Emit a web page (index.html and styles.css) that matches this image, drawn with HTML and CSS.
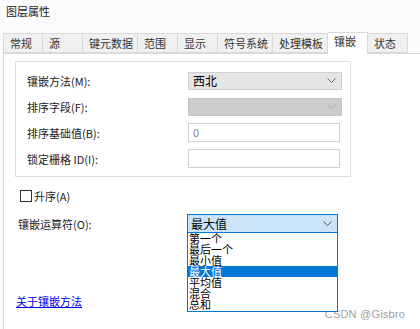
FILE: index.html
```html
<!DOCTYPE html>
<html lang="zh-CN">
<head>
  <meta charset="UTF-8">
  <title>图层属性</title>
  <link rel="stylesheet" href="styles.css">
</head>
<body>
  <div class="window">
    <div class="title">图层属性</div>

    <div class="tabs">
      <span class="tab">常规</span>
      <span class="tab">源</span>
      <span class="tab">键元数据</span>
      <span class="tab">范围</span>
      <span class="tab">显示</span>
      <span class="tab">符号系统</span>
      <span class="tab">处理模板</span>
      <span class="tab active">镶嵌</span>
      <span class="tab">状态</span>
    </div>

    <div class="page">
      <div class="group">
        <div class="row">
          <label>镶嵌方法(M):</label>
          <div class="select">西北
            <svg class="chev" width="9" height="6" viewBox="0 0 9 6"><path d="M0.5 0.5 L4.5 4.5 L8.5 0.5" fill="none" stroke="#666" stroke-width="1"/></svg>
          </div>
        </div>
        <div class="row">
          <label>排序字段(F):</label>
          <div class="select disabled">
            <svg class="chev" width="9" height="6" viewBox="0 0 9 6"><path d="M0.5 0.5 L4.5 4.5 L8.5 0.5" fill="none" stroke="#aaa" stroke-width="1"/></svg>
          </div>
        </div>
        <div class="row">
          <label>排序基础值(B):</label>
          <div class="input muted">0</div>
        </div>
        <div class="row">
          <label>锁定栅格 ID(I):</label>
          <div class="input"></div>
        </div>
      </div>

      <div class="check"><span class="box"></span>升序(A)</div>

      <div class="row op">
        <label>镶嵌运算符(O):</label>
        <div class="combo">
          <div class="combo-head">最大值
            <svg class="chev" width="9" height="6" viewBox="0 0 9 6"><path d="M0.5 0.5 L4.5 4.5 L8.5 0.5" fill="none" stroke="#555" stroke-width="1"/></svg>
          </div>
          <ul class="list">
            <li>第一个</li>
            <li>最后一个</li>
            <li>最小值</li>
            <li class="sel">最大值</li>
            <li>平均值</li>
            <li>混合</li>
            <li>总和</li>
          </ul>
        </div>
      </div>

      <a class="about" href="#">关于镶嵌方法</a>
    </div>

    <div class="mark">CSDN @Gisbro</div>
  </div>
</body>
</html>
```

FILE: styles.css
```css
:root {
  --line: #d9d9d9;
  --tab-bg: #f0f0f0;
  --blue: #0078d7;
  --text: #1a1a1a;
}

body {
  margin: 0;
  font-family: "Noto Sans CJK SC", "Liberation Sans", sans-serif;
  font-size: 11px;
  color: var(--text);
  background: #ffffff;
}

.window {
  position: relative;
  width: 420px;
  height: 329px;
  overflow: hidden;
  background: #fbfbfb;
}

.title {
  height: 31px;
  padding: 3px 0 0 6px;
  box-sizing: border-box;
  line-height: 16px;
  font-size: 11px;
}

.tabs {
  display: flex;
  align-items: flex-end;
  margin-left: 3px;
  height: 22px;
}

.tab {
  min-width: 40px;
  height: 20px;
  padding: 0 4px 0 6px;
  box-sizing: border-box;
  background: var(--tab-bg);
  border: 1px solid var(--line);
  border-left: none;
  line-height: 18px;
  color: #333;
}

.tab:first-child {
  border-left: 1px solid var(--line);
}

.tab.active {
  height: 22px;
  background: #ffffff;
  border-bottom-color: #ffffff;
  line-height: 16px;
  margin-bottom: -1px;
  position: relative;
}

.page {
  margin-left: 3px;
  height: 276px;
  background: #ffffff;
  border-left: 1px solid var(--line);
  border-top: 1px solid var(--line);
  padding: 7px 0 0 11px;
  box-sizing: border-box;
}

.group {
  width: 336px;
  box-sizing: border-box;
  border: 1px solid #dcdcdc;
  padding: 9px 0 8px 11px;
  display: flex;
  flex-direction: column;
  gap: 7px;
}

.row {
  display: flex;
  align-items: center;
  height: 19px;
}

.row label {
  width: 161px;
  line-height: 14px;
}

.select {
  width: 154px;
  height: 18px;
  box-sizing: border-box;
  background: #e5e5e5;
  border: 1px solid #d0d0d0;
  display: flex;
  align-items: center;
  justify-content: space-between;
  padding: 0 5px 0 4px;
  font-size: 12px;
  color: #000;
}

.select.disabled {
  background: #cccccc;
  border-color: #c4c4c4;
  justify-content: flex-end;
}

.input {
  width: 152px;
  height: 19px;
  box-sizing: border-box;
  border: 1px solid #cfcfcf;
  padding: 0 4px;
  line-height: 17px;
}

.input.muted {
  color: #8a8a8a;
}

.check {
  display: flex;
  align-items: center;
  gap: 2px;
  margin: 13px 0 0 5px;
  line-height: 12px;
}

.box {
  width: 10px;
  height: 10px;
  border: 1px solid #333;
  background: #ffffff;
}

.row.op {
  margin: 12px 0 0 3px;
}

.row.op label {
  width: 169px;
}

.combo {
  position: relative;
  width: 151px;
}

.combo-head {
  height: 19px;
  box-sizing: border-box;
  background: #cce4f7;
  border: 1px solid var(--blue);
  display: flex;
  align-items: center;
  justify-content: space-between;
  padding: 0 5px 0 3px;
  font-size: 12px;
  color: #000;
}

.list {
  position: absolute;
  top: 18px;
  left: 0;
  width: 151px;
  box-sizing: border-box;
  margin: 0;
  padding: 0 0 1px;
  list-style: none;
  background: #ffffff;
  border: 1px solid var(--blue);
  font-size: 11px;
  color: #000;
  z-index: 2;
}

.list li {
  height: 11px;
  line-height: 11px;
  padding-left: 1px;
}

.list li.sel {
  background: var(--blue);
  color: #ffffff;
}

.about {
  display: inline-block;
  margin: 61px 0 0 1px;
  color: #0000ee;
  line-height: 14px;
}

.mark {
  position: absolute;
  right: 15px;
  bottom: 9px;
  font-family: "Liberation Sans", sans-serif;
  font-size: 11px;
  color: #a0a0a0;
  letter-spacing: 0.2px;
}
```
